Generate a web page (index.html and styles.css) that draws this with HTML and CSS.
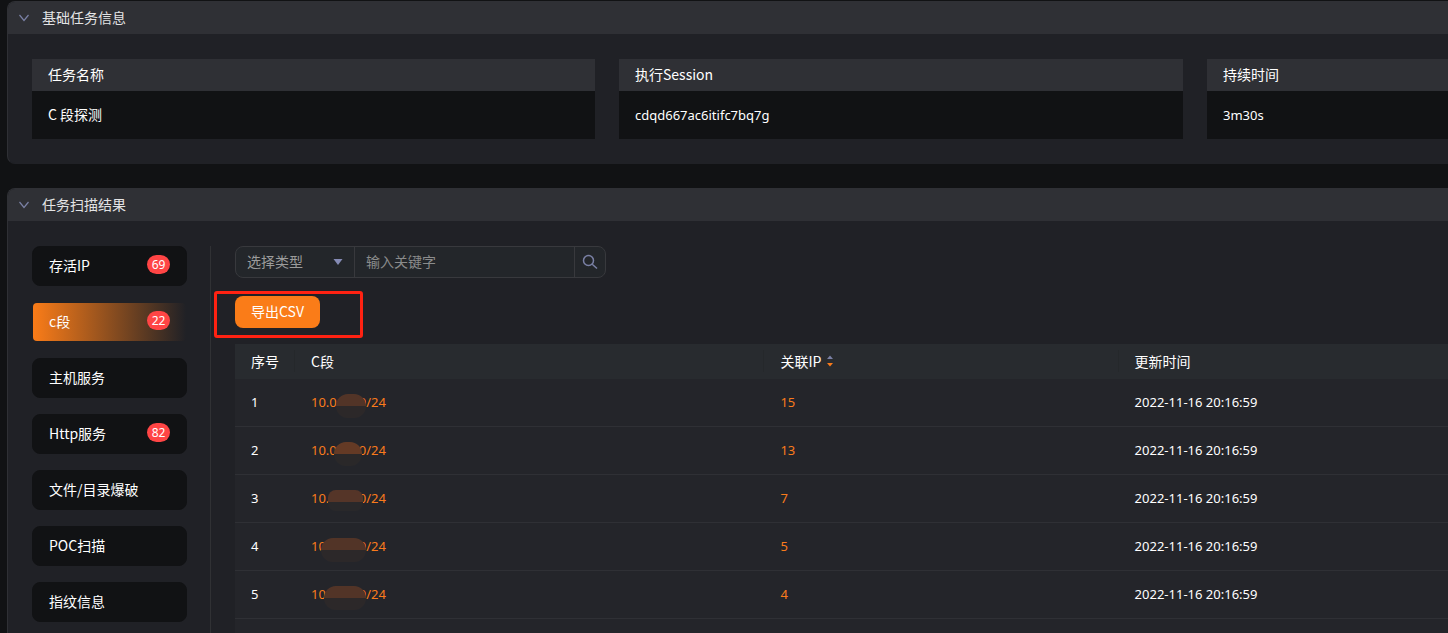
FILE: index.html
```html
<!DOCTYPE html>
<html lang="zh-CN">
<head>
<meta charset="utf-8">
<title>任务扫描结果</title>
<link rel="stylesheet" href="styles.css">
</head>
<body>
<main class="page">
  <section class="panel">
    <header class="panel-head">
      <svg class="chevron" viewBox="0 0 12 8" aria-hidden="true"><path d="M1.500 1L6 6.500L10.500 1"/></svg>
      <h2 class="panel-title">基础任务信息</h2>
    </header>
    <dl class="info-grid">
      <div class="info"><dt>任务名称</dt><dd>C 段探测</dd></div>
      <div class="info"><dt>执行Session</dt><dd class="latin">cdqd667ac6itifc7bq7g</dd></div>
      <div class="info"><dt>持续时间</dt><dd class="latin">3m30s</dd></div>
    </dl>
  </section>

  <section class="panel panel-fill">
    <header class="panel-head">
      <svg class="chevron" viewBox="0 0 12 8" aria-hidden="true"><path d="M1.500 1L6 6.500L10.500 1"/></svg>
      <h2 class="panel-title">任务扫描结果</h2>
    </header>
    <div class="results">
      <nav class="tabs">
        <button class="tab" type="button">存活IP<span class="badge">69</span></button>
        <button class="tab active" type="button">c段<span class="badge">22</span></button>
        <button class="tab" type="button">主机服务</button>
        <button class="tab" type="button">Http服务<span class="badge">82</span></button>
        <button class="tab" type="button">文件/目录爆破</button>
        <button class="tab" type="button">POC扫描</button>
        <button class="tab" type="button">指纹信息</button>
      </nav>
      <div class="content">
        <form class="search">
          <div class="select-wrap">
            <select class="type-select" aria-label="选择类型"><option>选择类型</option></select>
            <svg class="caret" viewBox="0 0 10 6" aria-hidden="true"><path d="M0.500 0H9.500L5 6Z"/></svg>
          </div>
          <input class="keyword" type="text" placeholder="输入关键字" aria-label="输入关键字">
          <button class="search-btn" type="button" aria-label="搜索">
            <svg class="search-icon" viewBox="0 0 16 16" aria-hidden="true"><circle cx="6.500" cy="6.500" r="5"/><path d="M10.200 10.200L15 14.500"/></svg>
          </button>
        </form>
        <div class="export">
          <button class="export-btn" type="button">导出CSV</button>
          <span class="highlight"></span>
        </div>
        <div class="table-wrap">
          <table class="table">
            <colgroup><col class="col-no"><col class="col-seg"><col class="col-ip"><col></colgroup>
            <thead>
              <tr>
                <th><span>序号</span></th>
                <th><span>C段</span></th>
                <th><span>关联IP<svg class="sort" viewBox="0 0 6 12" aria-hidden="true"><path class="sort-up" d="M0 4L3 0.500L6 4Z"/><path class="sort-down" d="M0 8L3 11.500L6 8Z"/></svg></span></th>
                <th><span>更新时间</span></th>
              </tr>
            </thead>
            <tbody>
              <tr><td>1</td><td><a class="segment" href="#"><span>10.0</span><span>0/24</span><i class="mask mask-1"></i></a></td><td><a href="#">15</a></td><td>2022-11-16 20:16:59</td></tr>
              <tr><td>2</td><td><a class="segment" href="#"><span>10.0</span><span>0/24</span><i class="mask mask-2"></i></a></td><td><a href="#">13</a></td><td>2022-11-16 20:16:59</td></tr>
              <tr><td>3</td><td><a class="segment" href="#"><span>10.</span><span>0/24</span><i class="mask mask-3"></i></a></td><td><a href="#">7</a></td><td>2022-11-16 20:16:59</td></tr>
              <tr><td>4</td><td><a class="segment" href="#"><span>10</span><span>0/24</span><i class="mask mask-4"></i></a></td><td><a href="#">5</a></td><td>2022-11-16 20:16:59</td></tr>
              <tr><td>5</td><td><a class="segment" href="#"><span>10</span><span>0/24</span><i class="mask mask-5"></i></a></td><td><a href="#">4</a></td><td>2022-11-16 20:16:59</td></tr>
            </tbody>
          </table>
        </div>
      </div>
    </div>
  </section>
</main>
</body>
</html>
```
FILE: styles.css
```css
* { box-sizing: border-box; }

body {
  margin: 0;
  background: #111214;
  color: #fff;
  font: 14px/20px "Noto Sans CJK SC", sans-serif;
}

button, input, select { font: inherit; color: inherit; }
a { color: #f97b1c; text-decoration: none; }

.page {
  display: flex;
  flex-direction: column;
  gap: 24px;
  height: 100vh;
  padding: 1px 0 0 7px;
  overflow: hidden;
}

.panel {
  flex: none;
  border: 1px solid #2f3035;
  border-right: 0;
  border-bottom-color: #202126;
  border-radius: 8px 0 0 8px;
  background: #202126;
  overflow: hidden;
}

.panel-fill {
  display: flex;
  flex: 1;
  flex-direction: column;
  min-height: 0;
  border-bottom: 0;
  border-radius: 8px 0 0 0;
}

.panel-head {
  display: flex;
  flex: none;
  align-items: center;
  gap: 12px;
  height: 32px;
  padding-left: 10px;
  background: #2f3035;
}

.chevron {
  width: 12px;
  height: 8px;
  fill: none;
  stroke: #7a80a5;
  stroke-width: 1.2;
}

.panel-title {
  margin: 0;
  padding-bottom: 2px;
  font-size: 14px;
  font-weight: 400;
  color: #e3e3e4;
}

.info-grid {
  display: grid;
  grid-template-columns: 563fr 564fr 241fr;
  gap: 24px;
  margin: 0;
  padding: 25px 0 24px 24px;
}

.info dt { padding: 5px 16px 7px; background: #2f3035; }
.info dd { height: 48px; margin: 0; padding: 13px 16px; background: #111214; }
.info .latin { padding-top: 14px; font-family: "Noto Sans", sans-serif; font-size: 13px; }

.results {
  display: flex;
  flex: 1;
  gap: 24px;
  min-height: 0;
  padding: 25px 0 0 24px;
}

.tabs {
  display: flex;
  flex: none;
  flex-direction: column;
  gap: 16px;
  width: 179px;
  padding-right: 23px;
  border-right: 1px solid #303134;
}

.tab {
  display: flex;
  flex: none;
  align-items: center;
  justify-content: space-between;
  height: 40px;
  padding: 0 16px 2px;
  border: 1px solid #111214;
  border-radius: 8px;
  background: #111214;
  text-align: left;
}

.tab.active {
  border-color: transparent;
  border-radius: 5px;
  background: linear-gradient(90deg, #fa7c18, #202126) padding-box;
}

.badge {
  height: 19px;
  margin-bottom: 1px;
  padding: 0 4px;
  border-radius: 10px;
  background: #ff4545;
  font: 12px/19px "Noto Sans", sans-serif;
  min-width: 23px;
  text-align: center;
}

.content {
  display: flex;
  flex: 1;
  flex-direction: column;
  min-width: 0;
}

.search {
  display: flex;
  flex: none;
  width: 371px;
  height: 32px;
  border: 1px solid #38393d;
  border-radius: 8px;
  background: #23262a;
  overflow: hidden;
}

.select-wrap { position: relative; width: 119px; border-right: 1px solid #38393d; }

.type-select {
  width: 100%;
  height: 30px;
  padding: 0 11px 2px;
  border: 0;
  background: transparent;
  color: #9b9b9b;
  appearance: none;
}

.caret {
  position: absolute;
  top: 12px;
  right: 11px;
  width: 10px;
  height: 6px;
  fill: #858bb5;
  pointer-events: none;
}

.keyword {
  flex: 1;
  min-width: 0;
  padding: 0 11px 2px;
  border: 0;
  background: transparent;
}
.keyword::placeholder { color: #8a8b8b; }

.search-btn {
  display: grid;
  place-items: center;
  width: 31px;
  padding: 0;
  border: 0;
  border-left: 1px solid #38393d;
  background: transparent;
}

.search-icon {
  width: 16px;
  height: 16px;
  fill: none;
  stroke: #7a80a5;
  stroke-width: 1.5;
}

.export { position: relative; flex: none; height: 32px; margin: 18px 0 16px; }

.export-btn {
  width: 85px;
  height: 32px;
  padding: 0 0 2px;
  border: 0;
  border-radius: 8px;
  background: #fa7c18;
}

/* Callout frame drawn around the export action */
.highlight {
  position: absolute;
  top: -5px;
  left: -21px;
  width: 149px;
  height: 47px;
  border: 3px solid #ff2212;
  border-radius: 3px;
  pointer-events: none;
}

.table-wrap { flex: 1; min-height: 0; background: #24252a; overflow: hidden; }

.table {
  width: 100%;
  border-collapse: separate;
  border-spacing: 0;
  table-layout: fixed;
}
.col-no { width: 60px; }
.col-seg { width: 38.7%; }
.col-ip { width: 29.2%; }

.table th {
  height: 35px;
  padding: 0 0 2px;
  background: #282b2f;
  font-weight: 400;
  text-align: left;
}
.table th span {
  display: flex;
  align-items: center;
  gap: 6px;
  height: 22px;
  padding-left: 16px;
  border-right: 1px solid #25282b;
}
.table th:last-child span { border-right: 0; }

.sort { width: 6px; height: 12px; }
.sort-up { fill: #7a80a5; }
.sort-down { fill: #f97b1c; }

.table td {
  height: 48px;
  padding: 0 16px 2px;
  border-bottom: 1px solid #2f3035;
  font-family: "Noto Sans", sans-serif;
  font-size: 13px;
}

.segment {
  position: relative;
  display: flex;
  justify-content: space-between;
  width: 75px;
}

.mask {
  position: absolute;
  top: 2px;
  left: 25px;
  width: 30px;
  height: 24px;
  border-radius: 12px;
  background: linear-gradient(#523427 50%, #2c2829 50%);
}
.mask-2 { left: 23px; width: 28px; background: linear-gradient(#643a25 50%, #2a2829 50%); }
.mask-3 { left: 17px; width: 35px; height: 21px; border-radius: 8px; background: linear-gradient(#553528 57%, #29282a 57%); }
.mask-4 { left: 10px; width: 45px; }
.mask-5 { left: 13px; width: 42px; }
```
